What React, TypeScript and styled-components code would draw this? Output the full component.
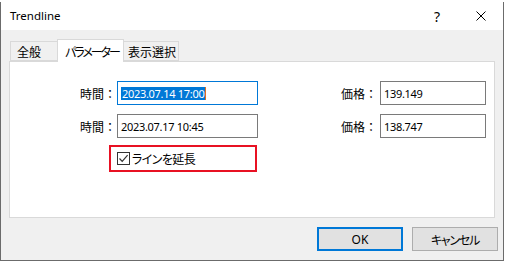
import React from 'react';
import styled, { createGlobalStyle, css } from 'styled-components';

const latin = `'Noto Sans', 'Open Sans', sans-serif`;
const jp = `'Noto Sans CJK JP', 'Noto Sans', sans-serif`;

const kana = css`
  font-family: ${jp};
  font-feature-settings: 'palt';
  font-size: 12px;
  letter-spacing: -1.2px;
  color: #000;
  white-space: nowrap;
`;

const GlobalStyle = createGlobalStyle`
  html, body {
    margin: 0;
    padding: 0;
    background: #ffffff;
  }
  * {
    box-sizing: border-box;
  }
`;

const Window = styled.div`
  width: 504px;
  height: 259px;
  margin-top: 2px;
  border: 1px solid #6b6b6b;
  border-top: none;
  display: flex;
  flex-direction: column;
  background: #f0f0f0;
`;

const TitleBar = styled.div`
  height: 28px;
  background: #ffffff;
  display: flex;
  align-items: center;
  padding-left: 9px;
  padding-bottom: 1px;
`;

const Title = styled.div`
  flex: 1;
  font-family: ${latin};
  font-size: 11.5px;
  color: #000;
`;

const HelpGlyph = styled.div`
  width: 14px;
  font-family: ${latin};
  font-size: 14px;
  color: #000;
  text-align: center;
  margin-right: 32px;
  margin-top: 1px;
`;

const CloseGlyph = styled.div`
  width: 10px;
  height: 10px;
  margin-right: 17px;
  display: flex;
`;

const Body = styled.div`
  flex: 1;
  padding: 9px 5px 0 8px;
  display: flex;
  flex-direction: column;
`;

const TabRow = styled.div`
  height: 22px;
  display: flex;
  align-items: flex-end;
  padding-left: 1px;
`;

interface TabProps {
  $active?: boolean;
  $width: number;
  $pad: number;
  $spacing: number;
}

const Tab = styled.div<TabProps>`
  ${kana};
  letter-spacing: ${(p) => p.$spacing}px;
  width: ${(p) => p.$width}px;
  height: ${(p) => (p.$active ? 23 : 20)}px;
  margin-bottom: ${(p) => (p.$active ? -1 : 0)}px;
  position: relative;
  z-index: ${(p) => (p.$active ? 1 : 0)};
  background: ${(p) => (p.$active ? '#ffffff' : '#f0f0f0')};
  border: 1px solid #d9d9d9;
  border-bottom: ${(p) => (p.$active ? 'none' : '1px solid #d9d9d9')};
  padding-left: ${(p) => p.$pad}px;
  padding-top: ${(p) => (p.$active ? 0 : 1)}px;
  display: flex;
  align-items: center;
`;

const Panel = styled.div`
  height: 157px;
  margin-right: 3px;
  background: #ffffff;
  border: 1px solid #d9d9d9;
  padding: 19px 0 0 0;
  display: flex;
  flex-direction: column;
`;

const FieldGrid = styled.div`
  display: grid;
  grid-template-columns: 107px 141px 122px 106px;
  grid-auto-rows: 24px;
  row-gap: 9px;
`;

const Label = styled.div<{ $padRight: number }>`
  display: flex;
  align-items: center;
  justify-content: flex-end;
  padding-right: ${(p) => p.$padRight}px;
  font-family: ${jp};
  font-size: 12px;
  color: #000;
  white-space: nowrap;
`;

const Field = styled.div<{ $focused?: boolean }>`
  border: 1px solid ${(p) => (p.$focused ? '#0078d7' : '#7a7a7a')};
  background: #ffffff;
  display: flex;
  align-items: center;
  padding-left: 3px;
  font-family: ${latin};
  font-size: 11px;
  letter-spacing: -0.3px;
  color: #000;
  white-space: nowrap;
`;

const Selection = styled.span`
  background: #0078d7;
  color: #ffffff;
  padding: 1px;
  line-height: 11px;
  border-right: 1px solid #e07020;
`;

const Highlight = styled.div`
  width: 148px;
  height: 27px;
  margin: 7px 0 0 99px;
  border: 2px solid #e81123;
  display: flex;
  align-items: center;
  padding-left: 6px;
`;

const CheckBox = styled.div`
  width: 13px;
  height: 13px;
  border: 1px solid #333333;
  background: #ffffff;
  display: flex;
  align-items: center;
  justify-content: center;
  margin-right: 2px;
`;

const CheckLabel = styled.span`
  ${kana};
  letter-spacing: -0.6px;
`;

const ButtonRow = styled.div`
  display: flex;
  justify-content: flex-end;
  gap: 9px;
  margin-top: 9px;
`;

const Button = styled.div<{ $default?: boolean }>`
  ${kana};
  width: 86px;
  height: 24px;
  background: #e1e1e1;
  border: ${(p) => (p.$default ? '2px solid #0078d7' : '1px solid #adadad')};
  display: flex;
  align-items: center;
  justify-content: center;
`;

const ButtonLatin = styled.span`
  font-family: ${latin};
  font-size: 12px;
  letter-spacing: 0;
`;

const App = () => {
  return (
    <>
      <GlobalStyle />
      <Window>
        <TitleBar>
          <Title>Trendline</Title>
          <HelpGlyph>?</HelpGlyph>
          <CloseGlyph>
            <svg width="10" height="10" viewBox="0 0 10 10">
              <path d="M0.5 0.5 L9.5 9.5 M9.5 0.5 L0.5 9.5" stroke="#000" strokeWidth="1" fill="none" />
            </svg>
          </CloseGlyph>
        </TitleBar>
        <Body>
          <TabRow>
            <Tab $width={47} $pad={6} $spacing={0} style={{ borderRight: 'none' }}>
              全般
            </Tab>
            <Tab $active $width={67} $pad={7} $spacing={-2}>
              パラメーター
            </Tab>
            <Tab $width={55} $pad={4} $spacing={0} style={{ borderLeft: 'none' }}>
              表示選択
            </Tab>
          </TabRow>
          <Panel>
            <FieldGrid>
              <Label $padRight={1}>時間：</Label>
              <Field $focused>
                <Selection>2023.07.14 17:00</Selection>
              </Field>
              <Label $padRight={3}>価格：</Label>
              <Field>139.149</Field>
              <Label $padRight={1}>時間：</Label>
              <Field>2023.07.17 10:45</Field>
              <Label $padRight={3}>価格：</Label>
              <Field>138.747</Field>
            </FieldGrid>
            <Highlight>
              <CheckBox>
                <svg width="11" height="11" viewBox="0 0 11 11">
                  <path d="M1.5 5.5 L4.2 8.3 L9.6 2.2" stroke="#333" strokeWidth="1.2" fill="none" />
                </svg>
              </CheckBox>
              <CheckLabel>ラインを延長</CheckLabel>
            </Highlight>
          </Panel>
          <ButtonRow>
            <Button $default>
              <ButtonLatin>OK</ButtonLatin>
            </Button>
            <Button>キャンセル</Button>
          </ButtonRow>
        </Body>
      </Window>
    </>
  );
};

export default App;
